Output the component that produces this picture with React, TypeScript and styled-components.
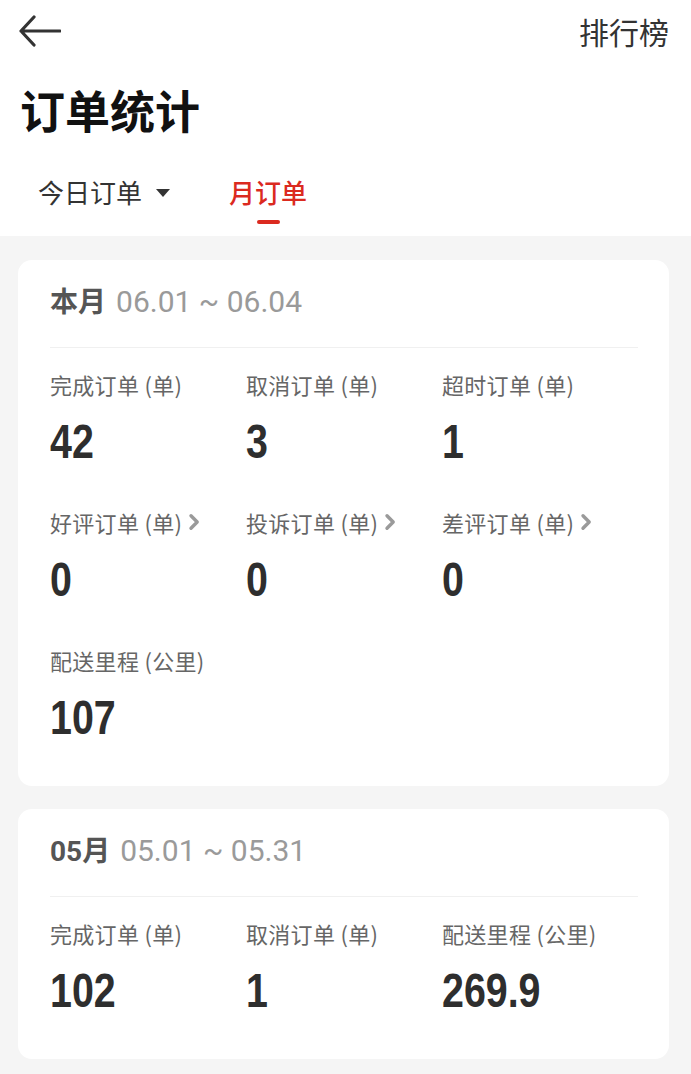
import React from 'react';
import styled, { createGlobalStyle } from 'styled-components';

const GlobalStyle = createGlobalStyle`
  html, body {
    margin: 0;
    padding: 0;
    background: #f5f5f5;
  }
  body {
    font-family: Roboto, "Noto Sans CJK SC", sans-serif;
    color: #333;
  }
  * {
    box-sizing: border-box;
  }
`;

type Stat = {
  label: string;
  value: string;
  link?: boolean;
};

type Period = {
  name: string;
  range: string;
  stats: Stat[];
};

const periods: Period[] = [
  {
    name: '本月',
    range: '06.01 ~ 06.04',
    stats: [
      { label: '完成订单 (单)', value: '42' },
      { label: '取消订单 (单)', value: '3' },
      { label: '超时订单 (单)', value: '1' },
      { label: '好评订单 (单)', value: '0', link: true },
      { label: '投诉订单 (单)', value: '0', link: true },
      { label: '差评订单 (单)', value: '0', link: true },
      { label: '配送里程 (公里)', value: '107' },
    ],
  },
  {
    name: '05月',
    range: '05.01 ~ 05.31',
    stats: [
      { label: '完成订单 (单)', value: '102' },
      { label: '取消订单 (单)', value: '1' },
      { label: '配送里程 (公里)', value: '269.9' },
    ],
  },
];

const BackIcon = () => (
  <svg width="42" height="32" viewBox="0 0 42 32" fill="none">
    <path
      d="M15 2 L2 16 L15 30 M2 16 H41"
      stroke="#333"
      strokeWidth="3.2"
      strokeLinecap="round"
      strokeLinejoin="round"
    />
  </svg>
);

const Chevron = () => (
  <svg width="15" height="18" viewBox="0 0 15 18" fill="none">
    <path
      d="M4 2.8 L10.2 9 L4 15.2"
      stroke="#9a9a9a"
      strokeWidth="3.4"
      strokeLinecap="round"
      strokeLinejoin="round"
    />
  </svg>
);

const App: React.FC = () => {
  return (
    <>
      <GlobalStyle />
      <Page>
        <Top>
          <NavBar>
            <BackButton>
              <BackIcon />
            </BackButton>
            <NavAction>排行榜</NavAction>
          </NavBar>
          <Title>订单统计</Title>
          <Tabs>
            <Tab>
              今日订单
              <Caret />
            </Tab>
            <Tab active>月订单</Tab>
          </Tabs>
        </Top>
        <Content>
          {periods.map((period) => (
            <Card key={period.name}>
              <CardHeader>
                <PeriodName>{period.name}</PeriodName>
                <PeriodRange>{period.range}</PeriodRange>
              </CardHeader>
              <Divider />
              <StatGrid>
                {period.stats.map((stat) => (
                  <StatItem key={stat.label}>
                    <StatLabel>
                      {stat.label}
                      {stat.link && <Chevron />}
                    </StatLabel>
                    <StatValue>
                      <Digits>{stat.value}</Digits>
                    </StatValue>
                  </StatItem>
                ))}
              </StatGrid>
            </Card>
          ))}
        </Content>
      </Page>
    </>
  );
};

const Page = styled.div`
  width: 691px;
  min-height: 1074px;
  background: #f5f5f5;
`;

const Top = styled.div`
  background: #fff;
`;

const NavBar = styled.div`
  height: 62px;
  display: flex;
  align-items: center;
  justify-content: space-between;
  padding: 0 22px 0 19px;
`;

const BackButton = styled.div`
  display: flex;
  align-items: center;
  padding-bottom: 1px;
`;

const NavAction = styled.div`
  font-family: "Noto Sans CJK SC", sans-serif;
  font-size: 30px;
  line-height: 30px;
  color: #333;
`;

const Title = styled.h1`
  margin: 0;
  padding: 25px 20px 0;
  font-family: "Noto Sans CJK SC", sans-serif;
  font-size: 45px;
  line-height: 45px;
  font-weight: 700;
  color: #111;
`;

const Tabs = styled.div`
  display: flex;
  gap: 59px;
  padding: 45px 38px 0;
`;

const Tab = styled.div<{ active?: boolean }>`
  position: relative;
  display: flex;
  align-items: flex-start;
  gap: 14px;
  height: 59px;
  padding-top: 2px;
  font-family: "Noto Sans CJK SC", sans-serif;
  font-size: 26px;
  line-height: 26px;
  font-weight: ${(p) => (p.active ? 500 : 400)};
  color: ${(p) => (p.active ? '#db2a1f' : '#333')};

  &::after {
    content: '';
    display: ${(p) => (p.active ? 'block' : 'none')};
    position: absolute;
    left: 50%;
    bottom: 12px;
    width: 23px;
    height: 4px;
    margin-left: -11px;
    border-radius: 2px;
    background: #db2a1f;
  }
`;

const Caret = styled.span`
  margin-top: 10px;
  width: 0;
  height: 0;
  border-left: 7px solid transparent;
  border-right: 7px solid transparent;
  border-top: 8px solid #333;
`;

const Content = styled.div`
  display: flex;
  flex-direction: column;
  gap: 23px;
  padding: 24px 22px 16px 18px;
`;

const Card = styled.div`
  background: #fff;
  border-radius: 14px;
  padding: 26px 31px 44px 32px;
`;

const CardHeader = styled.div`
  display: flex;
  align-items: baseline;
  gap: 10px;
  height: 31px;
  line-height: 31px;
`;

const PeriodName = styled.span`
  font-family: Roboto, "Noto Sans CJK SC", sans-serif;
  font-size: 28px;
  font-weight: 700;
  color: #555;
`;

const PeriodRange = styled.span`
  font-family: Roboto, "Noto Sans CJK SC", sans-serif;
  font-size: 30px;
  color: #9a9a9a;
`;

const Divider = styled.div`
  height: 1px;
  margin: 30px 0 25px;
  background: #f0f0f0;
`;

const StatGrid = styled.div`
  display: grid;
  grid-template-columns: repeat(3, 1fr);
  row-gap: 45px;
`;

const StatItem = styled.div`
  display: flex;
  flex-direction: column;
  gap: 23px;
`;

const StatLabel = styled.div`
  display: flex;
  align-items: center;
  gap: 5px;
  font-family: "Noto Sans CJK SC", sans-serif;
  font-size: 22px;
  line-height: 22px;
  letter-spacing: 0.3px;
  color: #666;
  white-space: nowrap;
`;

const StatValue = styled.div`
  height: 48px;
  font-family: "Liberation Sans", Arial, sans-serif;
  font-size: 48px;
  line-height: 48px;
  font-weight: 700;
  color: #2e2e2e;
`;

/* narrow numerals: Arial Narrow is Arial at ~82% width */
const Digits = styled.span`
  display: inline-block;
  transform: scaleX(0.82);
  transform-origin: left center;
`;

export default App;
